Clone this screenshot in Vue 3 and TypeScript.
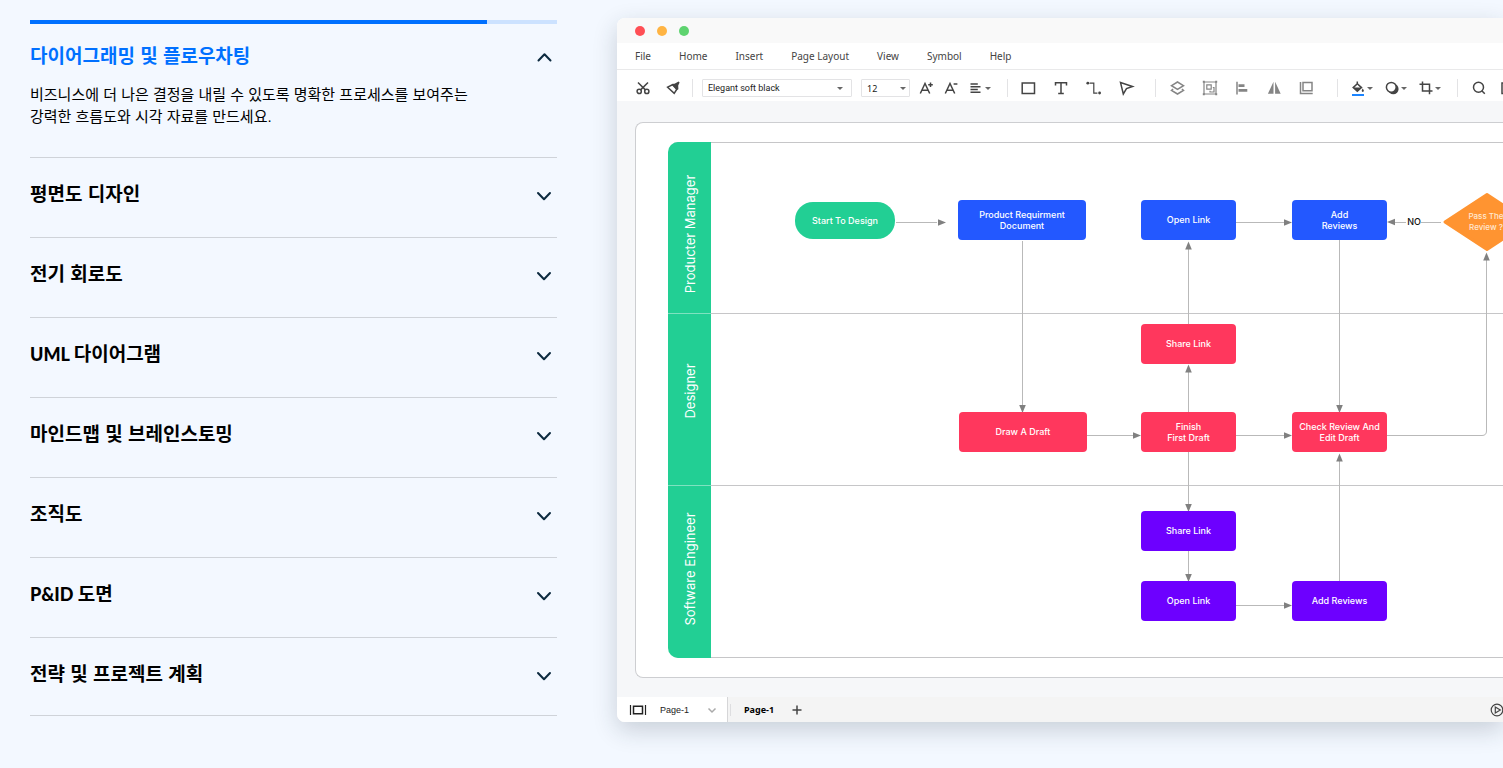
<script setup lang="ts">
import { ref } from 'vue'

interface Topic { latin?: string; title: string; text?: string[] }
interface DiagramNode { x: number; y: number; w: number; h: number; kind: string; lines: string[]; round?: number }

const topics: Topic[] = [
  { title: '다이어그래밍 및 플로우차팅', text: ['비즈니스에 더 나은 결정을 내릴 수 있도록 명확한 프로세스를 보여주는', '강력한 흐름도와 시각 자료를 만드세요.'] },
  { title: '평면도 디자인' },
  { title: '전기 회로도' },
  { latin: 'UML', title: '다이어그램' },
  { title: '마인드맵 및 브레인스토밍' },
  { title: '조직도' },
  { latin: 'P&ID', title: '도면' },
  { title: '전략 및 프로젝트 계획' },
]
const active = ref(0)
const progress = ref(86.7)

const menus = ['File', 'Home', 'Insert', 'Page Layout', 'View', 'Symbol', 'Help']
const lanes = [
  { name: 'Producter Manager', y: 234 },
  { name: 'Designer', y: 391 },
  { name: 'Software Engineer', y: 569 },
]

const nodes: DiagramNode[] = [
  { x: 795, y: 202, w: 100, h: 37, kind: 'green', lines: ['Start To Design'], round: 18 },
  { x: 958, y: 200, w: 128, h: 40, kind: 'blue', lines: ['Product Requirment', 'Document'] },
  { x: 1141, y: 200, w: 95, h: 40, kind: 'blue', lines: ['Open Link'] },
  { x: 1292, y: 200, w: 95, h: 40, kind: 'blue', lines: ['Add', 'Reviews'] },
  { x: 1141, y: 324, w: 95, h: 40, kind: 'red', lines: ['Share Link'] },
  { x: 959, y: 412, w: 128, h: 40, kind: 'red', lines: ['Draw A Draft'] },
  { x: 1141, y: 412, w: 95, h: 40, kind: 'red', lines: ['Finish', 'First Draft'] },
  { x: 1292, y: 412, w: 95, h: 40, kind: 'red', lines: ['Check Review And', 'Edit Draft'] },
  { x: 1141, y: 511, w: 95, h: 40, kind: 'violet', lines: ['Share Link'] },
  { x: 1141, y: 581, w: 95, h: 40, kind: 'violet', lines: ['Open Link'] },
  { x: 1292, y: 581, w: 95, h: 40, kind: 'violet', lines: ['Add Reviews'] },
]

const wires: string[] = [
  'M896 222.5H937', 'M1236 222.5H1286', 'M1392 222.5H1406M1421 222.5H1441',
  'M1022.5 241V408', 'M1188.5 324V247', 'M1188.5 412V370', 'M1188.5 452V506',
  'M1188.5 551V576', 'M1236 605.5H1286', 'M1339.5 581V459', 'M1339.5 240V408',
  'M1087 435.5H1136', 'M1236 435.5H1286', 'M1387 435.5H1482Q1486.5 435.5 1486.5 431V258',
]

/* Arrow tips: position and heading in degrees, 0 pointing right. */
const tips: [number, number, number][] = [
  [946, 222.5, 0], [1292, 222.5, 0], [1387, 222, 180], [1022.5, 413, 90],
  [1188.5, 241.5, -90], [1188.5, 364.5, -90], [1188.5, 512, 90], [1188.5, 582, 90],
  [1292, 605.5, 0], [1339.5, 453.5, -90], [1339.5, 413, 90], [1141, 435.5, 0],
  [1292, 435.5, 0], [1486.5, 252.5, -90],
]

const baseline = (n: DiagramNode, i: number): number =>
  n.y + n.h / 2 + 3 + (i - (n.lines.length - 1) / 2) * 11
</script>

<template>
  <main class="page">
    <section class="topics">
      <article v-for="(t, i) in topics" :key="t.title" class="topic" :class="{ open: active === i }">
        <div v-if="active === i" class="track"><div class="fill" :style="{ width: progress + '%' }"></div></div>
        <h3>
          <button type="button" class="head" :aria-expanded="active === i" @click="active = i">
            <span><span v-if="t.latin" class="latin">{{ t.latin }}&nbsp;</span>{{ t.title }}</span>
            <svg class="chev" viewBox="0 0 16 16" width="16" height="16" aria-hidden="true">
              <path :d="active === i ? 'M2.5 10.5l6-6.3 6 6.3' : 'M2 5l6 6.3L14 5'" />
            </svg>
          </button>
        </h3>
        <p v-if="t.text && active === i"><span v-for="line in t.text" :key="line" class="line">{{ line }}</span></p>
      </article>
    </section>

    <section class="window">
      <div class="titlebar"><i class="dot close"></i><i class="dot mini"></i><i class="dot zoom"></i></div>
      <nav class="menubar"><button v-for="m in menus" :key="m" type="button">{{ m }}</button></nav>

      <div class="toolbar">
        <div class="group first">
          <button type="button" aria-label="Cut">
            <svg viewBox="0 0 16 16"><circle cx="4.2" cy="11.4" r="2.1" /><circle cx="11.8" cy="11.4" r="2.1" /><path d="M3 2.5l7.4 7.4M13 2.5L5.6 9.9" /></svg>
          </button>
          <button type="button" aria-label="Format painter">
            <svg viewBox="0 0 16 16"><path class="solid" d="M6.5 4.8L10 3.4l3.6-2 1 1-1.4 3.2.2 3.6-2 .8z" /><path d="M2.6 7.2L8 4.5l4 4.5-2.8 4.4z" /></svg>
          </button>
        </div>
        <span class="sep near"></span>
        <label class="pick family"><select aria-label="Font"><option>Elegant soft black</option></select><i class="caret"></i></label>
        <label class="pick size"><select aria-label="Font size"><option>12</option></select><i class="caret"></i></label>
        <div class="group text">
          <button type="button" aria-label="Larger text"><svg viewBox="0 0 16 16"><path d="M2.3 13.5L7 3.5l4.7 10M4 10.2h6M10.2 4.7h4.6M12.5 2.4V7" /></svg></button>
          <button type="button" aria-label="Smaller text"><svg viewBox="0 0 16 16"><path d="M2.3 13.5L7 3.5l4.7 10M4 10.2h6M10.6 4h3.8" /></svg></button>
          <button type="button" aria-label="Alignment"><svg viewBox="0 0 16 16"><path d="M2.5 4h7.3M2.5 6.8h10M2.5 9.5h7.3M2.5 12.2h10" /></svg><i class="caret"></i></button>
        </div>
        <span class="sep"></span>
        <div class="group shapes">
          <button type="button" aria-label="Rectangle"><svg viewBox="0 0 16 16"><path d="M2.2 3h12.3v10.5H2.2z" /></svg></button>
          <button type="button" aria-label="Text"><svg viewBox="0 0 16 16"><path d="M2.5 5.5V2.7h11v2.8M8 2.7v11M5.2 13.5h5.6" /></svg></button>
          <button type="button" aria-label="Connector"><svg viewBox="0 0 16 16"><path class="mid" d="M3.6 3.2h4.2v10h3.6" /><circle class="solid" cx="1.8" cy="3.2" r="1.4" /><circle class="solid" cx="13.6" cy="13" r="1.4" /></svg></button>
          <button type="button" aria-label="Pointer"><svg viewBox="0 0 16 16"><path d="M1.5 2.5l12 4-6 2-3.2 5.5z" /></svg></button>
        </div>
        <span class="sep wide"></span>
        <div class="group arrange">
          <button type="button" aria-label="Layers"><svg viewBox="0 0 16 16"><path d="M7.5 2l6 3.7-6 3.7-6-3.7zM3.1 9l-1.6 1.300 6 3.700 6-3.700L11.900 9" /></svg></button>
          <button type="button" aria-label="Group"><svg viewBox="0 0 16 16"><path class="mid" d="M2 2h12v12H2zM4.800 4.800h4.400v4.400H4.800zM10.800 7.500h1.200v4.500H8v-1.300" /><path class="solid" d="M.8.8h2v2h-2zM13.200.8h2v2h-2zM.8 13.200h2v2h-2zM13.200 13.200h2v2h-2z" /></svg></button>
          <button type="button" aria-label="Align left"><svg viewBox="0 0 16 16"><path d="M3 1.800v12.700" /><path class="solid" d="M4.500 4.300h6v2.800h-6zM4.500 9h8.800v2.800H4.500z" /></svg></button>
          <button type="button" aria-label="Flip"><svg viewBox="0 0 16 16"><path class="solid" d="M7.500 1.800v12H1.900zM9.100 1.800v12h5.600z" /></svg></button>
          <button type="button" aria-label="Same size"><svg viewBox="0 0 16 16"><path d="M5 2.500h9v8.300H5zM2.500 2v11.600h12.200" /></svg></button>
        </div>
        <span class="sep far"></span>
        <div class="group paint">
          <button type="button" aria-label="Fill"><svg viewBox="0 0 16 16"><path d="M7.300 1.500v2.200L3.200 7.600l4.100 3.600 4.200-3.600-4.200-3.900" /><path class="solid" d="M3.200 7.600h8.300l-4.200 3.600zM12.700 8.500c.8 1.200 1.200 1.800 1.200 2.300a1.100 1.100 0 0 1-2.200 0c0-.5.3-1.100 1-2.300z" /><path class="swatch" d="M2 15h12" /></svg><i class="caret"></i></button>
          <button type="button" aria-label="Shadow"><svg viewBox="0 0 16 16"><circle class="solid" cx="9.300" cy="9" r="5.300" /><circle class="paper-fill" cx="7.300" cy="7.300" r="4.900" /></svg><i class="caret"></i></button>
          <button type="button" aria-label="Crop"><svg viewBox="0 0 16 16"><path d="M4.500 1.500v9.500h10M1.500 4.300h10v9.900" /></svg><i class="caret"></i></button>
        </div>
        <span class="sep last"></span>
        <div class="group find">
          <button type="button" aria-label="Search"><svg viewBox="0 0 16 16"><circle cx="7.500" cy="7.300" r="5" /><path d="M11 11l2.800 2.800" /></svg></button>
          <button type="button" aria-label="Panel"><svg viewBox="0 0 16 16"><path d="M2 3h12v10.500H2z" /></svg></button>
        </div>
      </div>

      <div class="desk">
        <div class="paper">
          <div class="lanes"><div v-for="l in lanes" :key="l.name" class="lane"><div class="cap"></div></div></div>
          <svg class="diagram" viewBox="636 123 900 554" width="900" height="554">
            <text v-for="l in lanes" :key="l.name" class="lane-name" :transform="`translate(695 ${l.y}) rotate(-90)`">{{ l.name }}</text>
            <path v-for="w in wires" :key="w" class="wire" :d="w" />
            <path v-for="(a, i) in tips" :key="i" class="tip" d="M0 0l-8-3.300v6.600z" :transform="`translate(${a[0]} ${a[1]}) rotate(${a[2]})`" />
            <g v-for="(n, i) in nodes" :key="i">
              <rect :class="n.kind" :x="n.x" :y="n.y" :width="n.w" :height="n.h" :rx="n.round ?? 4" />
              <text v-for="(s, j) in n.lines" :key="s" class="node-text" :x="n.x + n.w / 2" :y="baseline(n, j)">{{ s }}</text>
            </g>
            <path class="orange" d="M1487 194.500L1529 222l-42 27.500L1445 222z" />
            <text class="node-text pale" x="1486" y="219">Pass The</text>
            <text class="node-text pale" x="1486" y="230">Review ?</text>
            <text class="node-text dark" x="1414" y="225">NO</text>
          </svg>
        </div>
      </div>

      <footer class="statusbar">
        <button type="button" class="sheet">
          <svg viewBox="0 0 18 16" width="18" height="16"><path class="mid" d="M1.500 3v10M16.500 3v10" /><path d="M4.500 4.200h9v7.600h-9z" /></svg>
          <span>Page-1</span>
          <svg class="down" viewBox="0 0 16 16" width="16" height="16"><path d="M4.500 6.500L8 10l3.500-3.500" /></svg>
        </button>
        <span class="grip"></span>
        <button type="button" class="current">Page-1</button>
        <button type="button" class="icon" aria-label="Add page"><svg viewBox="0 0 16 16" width="16" height="16"><path d="M8 3.500v9M3.500 8h9" /></svg></button>
        <button type="button" class="icon play" aria-label="Play"><svg viewBox="0 0 14 14" width="14" height="14"><circle class="mid" cx="8" cy="7" r="5.800" /><path class="mid" d="M6.300 4l5 3-5 3z" /></svg></button>
      </footer>
    </section>
  </main>
</template>

<style>
body { background: #f3f8ff; }
</style>

<style scoped>
* { box-sizing: border-box; }
.page {
  display: grid;
  grid-template-columns: minmax(0, 527fr) minmax(0, 886fr);
  gap: 60px;
  align-items: start;
  min-height: 100vh;
  padding: 18px 0 46px 30px;
  overflow: hidden;
  color: #000;
  font-family: "Liberation Sans", "Noto Sans CJK KR", sans-serif;
}
button {
  display: flex;
  align-items: center;
  margin: 0;
  padding: 0;
  border: 0;
  background: none;
  color: inherit;
  font: inherit;
  cursor: pointer;
}

.topics { padding-top: 2px; }
.topic { padding: 25px 0 30px; border-bottom: 1px solid #cfd3d9; }
.topic.open { padding: 0 0 29px; }
.topic:last-child { padding-bottom: 28px; }
.track { height: 4px; margin-bottom: 21px; background: #cce2ff; }
.fill { height: 100%; background: #0070ff; }
h3 { margin: 0; font-size: 19px; line-height: 24px; font-weight: 700; }
.head { justify-content: space-between; width: 100%; height: 24px; padding-right: 5px; text-align: left; }
.open .head { color: #0070ff; }
.latin { font-family: Lato, sans-serif; font-size: 18px; font-weight: 900; line-height: 16px; }
.chev { margin-top: 2px; fill: none; stroke: #0c2a3f; stroke-width: 2; stroke-linecap: round; stroke-linejoin: round; }
.topic p { margin: 15px 0 0; font-size: 15px; line-height: 22px; }
.line { display: block; }

.window {
  border-radius: 8px 0 0 8px;
  background: #fff;
  box-shadow: 0 8px 24px rgba(30, 45, 60, 0.2);
  color: #444;
  font-family: "Noto Sans", sans-serif;
}
.titlebar { display: flex; align-items: center; gap: 12px; height: 25px; padding-left: 18px; border-radius: 8px 0 0; background: #f9f9f9; }
.dot { width: 10px; height: 10px; border-radius: 50%; }
.close { background: #ff4f55; }
.mini { background: #ffb443; }
.zoom { background: #5ed36f; }
.menubar { display: flex; gap: 28px; height: 27px; padding-left: 18px; border-bottom: 1px solid #e9e9ea; font-size: 10px; white-space: nowrap; }

.toolbar { display: flex; align-items: center; height: 31px; padding: 5px 0 0 18px; overflow: hidden; }
.toolbar > * { flex: none; }
.toolbar svg { display: block; width: 16px; height: 16px; }
svg { fill: none; stroke: currentColor; stroke-width: 1.5; }
.mid { stroke-width: 1.2; }
.solid { fill: currentColor; stroke: none; }
.swatch { stroke: #1b84ff; stroke-width: 2; }
.paper-fill { fill: #fff; }
.group { display: flex; align-items: center; }
.first { gap: 14px; }
.text { gap: 9px; margin-left: 8px; }
.shapes { gap: 17px; }
.arrange { gap: 16px; color: #858585; }
.paint { gap: 11px; }
.find { gap: 13px; }
.sep { width: 1px; height: 18px; margin: 0 12px 0 16px; background: #e3e3e5; }
.sep.near { margin: 0 9px 0 11px; }
.sep.wide { margin: 0 14px 0 20px; }
.sep.far { margin-left: 23px; }
.sep.last { margin-right: 13px; }
.caret { width: 0; height: 0; margin-left: 1px; border: 3px solid transparent; border-top: 3px solid #666; border-bottom: 0; }
.pick { position: relative; display: block; height: 18px; }
.pick select {
  display: block;
  width: 100%;
  height: 18px;
  margin: 0;
  padding: 0 5px;
  border: 1px solid #e3e3e5;
  border-radius: 1px;
  appearance: none;
  background: #fff;
  color: #222;
  font-family: Roboto, sans-serif;
  font-size: 9px;
}
.pick .caret { position: absolute; top: 8px; right: 4px; pointer-events: none; }
.family { width: 150px; }
.family .caret { right: 9px; }
.size { width: 49px; margin-left: 9px; }
.size select { font-family: "Noto Sans", sans-serif; }

.desk { padding: 21px 0 19px 18px; background: #f6f7f9; }
.paper { position: relative; padding: 19px 0 19px 32px; overflow: hidden; border: 1px solid #cdced1; border-right: 0; border-radius: 8px 0 0 8px; background: #fff; }
.lanes { border-radius: 10px 0 0 10px; overflow: hidden; }
.lane { height: 172px; border-bottom: 1px solid #c6c6c8; }
.lane:first-child { border-top: 1px solid #c6c6c8; }
.cap { width: 43px; height: 172px; border-bottom: 1px solid #7fe2c0; background: #22cf94; }
.lane:first-child .cap { margin-top: -1px; }
.lane:last-child .cap { border-bottom: 0; }
.diagram { position: absolute; top: 0; left: 0; }
.wire { stroke: #b9b9b9; stroke-width: 1; }
.tip { fill: #808080; stroke: none; }
rect { stroke: none; }
.green { fill: #22cf94; }
.blue { fill: #2358ff; }
.red { fill: #ff375d; }
.violet { fill: #6d00ff; }
.orange { fill: #ff9431; stroke: #ff9431; stroke-width: 3; stroke-linejoin: round; }
text { fill: #fff; stroke: none; text-anchor: middle; font-family: Inter, sans-serif; }
.node-text { font-size: 9px; font-weight: 500; }
.lane-name { font-size: 13px; }
.pale { fill: #ffe8d2; font-size: 8px; }
.dark { fill: #111; }

.statusbar { display: flex; align-items: center; height: 25px; border-radius: 0 0 0 8px; overflow: hidden; background: #f4f4f4; font-size: 9px; }
.sheet { width: 111px; height: 25px; padding-left: 12px; border-right: 1px solid #d6d6d8; background: #fff; color: #222; font-family: "Liberation Sans", sans-serif; }
.sheet span { margin: 0 13px; }
.down { margin-left: auto; margin-right: 7px; color: #aaa; }
.grip { width: 1px; height: 12px; margin: 0 13px 0 2px; background: #dedee0; }
.current { margin-right: 15px; color: #000; font-weight: 700; }
.icon svg { display: block; }
.play { margin-left: auto; }
</style>
